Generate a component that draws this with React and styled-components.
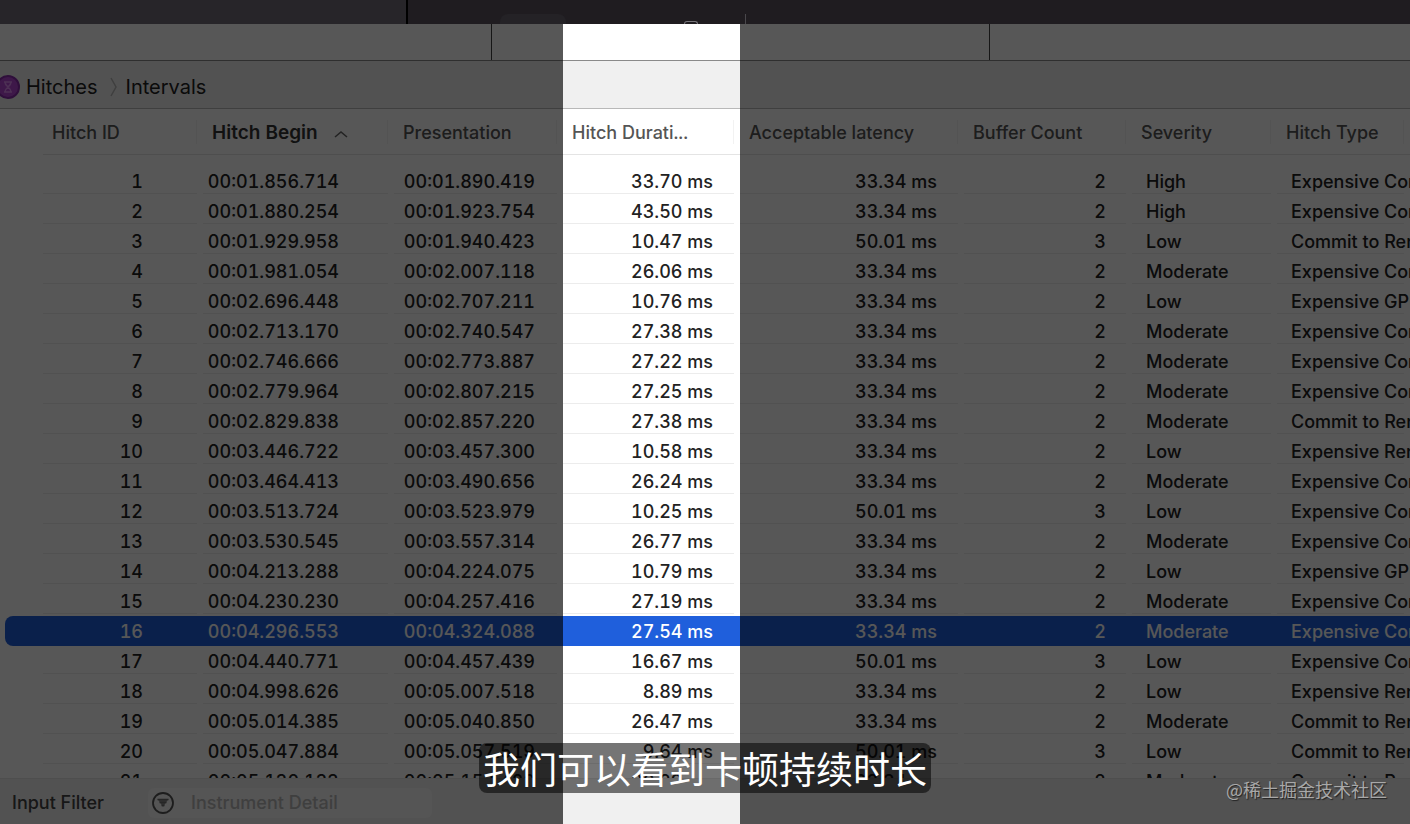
import styled, { createGlobalStyle } from "styled-components";

const columns = [
    { label: "Hitch ID", width: "160px", align: "right", pad: 60 },
    { label: "Hitch Begin", width: "191px", align: "right", pad: 55, sorted: true },
    { label: "Presentation", width: "169px", align: "right", pad: 28 },
    { label: "Hitch Durati...", width: "177px", align: "right", pad: 27 },
    { label: "Acceptable latency", width: "224px", align: "right", pad: 27 },
    { label: "Buffer Count", width: "168px", align: "right", pad: 26 },
    { label: "Severity", width: "145px", align: "left", pad: 14 },
    { label: "Hitch Type", width: "auto", align: "left", pad: 14 }
];

const COMMIT = "Expensive Commit";
const GPU = "Expensive GPU";
const RENDER = "Expensive Render";
const TO_RENDER = "Commit to Render";

const hitches = [
    ["1", "00:01.856.714", "00:01.890.419", "33.70 ms", "33.34 ms", "2", "High", COMMIT],
    ["2", "00:01.880.254", "00:01.923.754", "43.50 ms", "33.34 ms", "2", "High", COMMIT],
    ["3", "00:01.929.958", "00:01.940.423", "10.47 ms", "50.01 ms", "3", "Low", TO_RENDER],
    ["4", "00:01.981.054", "00:02.007.118", "26.06 ms", "33.34 ms", "2", "Moderate", COMMIT],
    ["5", "00:02.696.448", "00:02.707.211", "10.76 ms", "33.34 ms", "2", "Low", GPU],
    ["6", "00:02.713.170", "00:02.740.547", "27.38 ms", "33.34 ms", "2", "Moderate", COMMIT],
    ["7", "00:02.746.666", "00:02.773.887", "27.22 ms", "33.34 ms", "2", "Moderate", COMMIT],
    ["8", "00:02.779.964", "00:02.807.215", "27.25 ms", "33.34 ms", "2", "Moderate", COMMIT],
    ["9", "00:02.829.838", "00:02.857.220", "27.38 ms", "33.34 ms", "2", "Moderate", TO_RENDER],
    ["10", "00:03.446.722", "00:03.457.300", "10.58 ms", "33.34 ms", "2", "Low", RENDER],
    ["11", "00:03.464.413", "00:03.490.656", "26.24 ms", "33.34 ms", "2", "Moderate", COMMIT],
    ["12", "00:03.513.724", "00:03.523.979", "10.25 ms", "50.01 ms", "3", "Low", COMMIT],
    ["13", "00:03.530.545", "00:03.557.314", "26.77 ms", "33.34 ms", "2", "Moderate", COMMIT],
    ["14", "00:04.213.288", "00:04.224.075", "10.79 ms", "33.34 ms", "2", "Low", GPU],
    ["15", "00:04.230.230", "00:04.257.416", "27.19 ms", "33.34 ms", "2", "Moderate", COMMIT],
    ["16", "00:04.296.553", "00:04.324.088", "27.54 ms", "33.34 ms", "2", "Moderate", COMMIT],
    ["17", "00:04.440.771", "00:04.457.439", "16.67 ms", "50.01 ms", "3", "Low", COMMIT],
    ["18", "00:04.998.626", "00:05.007.518", "8.89 ms", "33.34 ms", "2", "Low", RENDER],
    ["19", "00:05.014.385", "00:05.040.850", "26.47 ms", "33.34 ms", "2", "Moderate", TO_RENDER],
    ["20", "00:05.047.884", "00:05.057.519", "9.64 ms", "50.01 ms", "3", "Low", TO_RENDER],
    ["21", "00:05.130.133", "00:05.157.420", "26.29 ms", "33.34 ms", "2", "Moderate", TO_RENDER]
];

const SELECTED = "16";

export default function App() {
    return (
        <Page>
            <GlobalStyle />
            <TitleBar>
                <TitlePane />
                <TitleTools>
                    <Tab />
                    <Knob />
                    <Divider />
                </TitleTools>
            </TitleBar>
            <Window>
                <Tracks>
                    <Track $width={492} />
                    <Track $width={498} />
                </Tracks>
                <Breadcrumb>
                    <HitchIcon />
                    <Crumb href="#hitches">Hitches</Crumb>
                    <CrumbArrow />
                    <Crumb href="#intervals">Intervals</Crumb>
                </Breadcrumb>
                <TableArea>
                    <HitchTable />
                </TableArea>
                <FilterBar>
                    <FilterLabel htmlFor="detail">Input Filter</FilterLabel>
                    <FilterField>
                        <FilterIcon />
                        <FilterInput id="detail" placeholder="Instrument Detail" />
                    </FilterField>
                </FilterBar>
                <Spotlight />
            </Window>
            <Subtitle>我们可以看到卡顿持续时长</Subtitle>
            <Watermark>@稀土掘金技术社区</Watermark>
        </Page>
    );
}

function HitchTable() {
    return (
        <Table>
            <colgroup>
                <Col $width="43px" />
                {columns.map((column) => <Col key={column.label} $width={column.width} />)}
            </colgroup>
            <thead>
                <tr>
                    <HeadLead />
                    {columns.map((column) => (
                        <HeadCell key={column.label} $sorted={column.sorted}>
                            {column.label}
                            {column.sorted && <SortArrow />}
                        </HeadCell>
                    ))}
                </tr>
            </thead>
            <Body>
                {hitches.map((hitch) => (
                    <Row key={hitch[0]} $selected={hitch[0] === SELECTED}>
                        <LeadCell />
                        {hitch.map((value, i) => (
                            <Cell key={columns[i].label} $align={columns[i].align} $pad={columns[i].pad}>
                                {value}
                            </Cell>
                        ))}
                    </Row>
                ))}
            </Body>
        </Table>
    );
}

function HitchIcon() {
    return (
        <Badge viewBox="0 0 24 24" aria-hidden="true">
            <circle cx="12" cy="12" r="11" fill="#b648d6" stroke="#8a2cac" strokeWidth="2" />
            <path d="M8 7h8M8 17h8M9 7c0 5 6 5 6 10M15 7c0 5-6 5-6 10" fill="none" stroke="#e08cf5" strokeWidth="1.6" />
        </Badge>
    );
}

function CrumbArrow() {
    return (
        <Chevron viewBox="0 0 8 20" aria-hidden="true">
            <path d="M1 1l5 9-5 9" fill="none" stroke="#b8b8b8" strokeWidth="1.5" />
        </Chevron>
    );
}

function SortArrow() {
    return (
        <Sort viewBox="0 0 14 8" aria-hidden="true">
            <path d="M1 7l6-5 6 5" fill="none" stroke="#666" strokeWidth="1.6" />
        </Sort>
    );
}

function FilterIcon() {
    return (
        <Funnel viewBox="0 0 24 24" aria-hidden="true">
            <circle cx="12" cy="12" r="10" fill="none" stroke="#555" strokeWidth="1.8" />
            <path d="M6.500 8h11l-5.500 8z" fill="#8c8c8c" />
            <path d="M6.500 8.500h11M8.500 11.500h7M10.500 14.500h3" fill="none" stroke="#707070" strokeWidth="1.6" />
        </Funnel>
    );
}

const GlobalStyle = createGlobalStyle`
    * {
        box-sizing: border-box;
    }
    body {
        margin: 0;
        overflow: hidden;
        font-family: Inter, "Noto Sans CJK SC", sans-serif;
        font-size: 18px;
        font-weight: 500;
        color: #222222;
    }
`
const Page = styled.div`
    position: relative;
    display: flex;
    flex-direction: column;
    height: 100vh;
    overflow: hidden;
`
const TitleBar = styled.header`
    display: flex;
    flex: none;
    height: 24px;
    background-color: #1f1c20;
`
const TitlePane = styled.div`
    width: 408px;
    background-color: #272529;
    border-right: 2px solid #000000;
`
const TitleTools = styled.div`
    flex: 1;
    display: flex;
    align-items: flex-end;
    padding-left: 92px;
`
const Tab = styled.div`
    width: 66px;
    height: 10px;
    border-radius: 8px 8px 0 0;
    background-color: #242226;
`
const Knob = styled.div`
    width: 14px;
    height: 3px;
    margin-left: 118px;
    border: 1px solid #77757a;
    border-bottom: none;
    border-radius: 3px 3px 0 0;
`
const Divider = styled.div`
    width: 1px;
    height: 10px;
    margin-left: 47px;
    background-color: #4a484c;
`
const Window = styled.main`
    position: relative;
    flex: 1;
    display: flex;
    flex-direction: column;
    min-height: 0;
    overflow: hidden;
    background-color: #ffffff;
`
const Tracks = styled.div`
    display: flex;
    flex: none;
    height: 37px;
    border-bottom: 1px solid #8a8a8a;
`
const Track = styled.div`
    width: ${(props) => props.$width}px;
    border-right: 1px solid #404040;
`
const Breadcrumb = styled.nav`
    display: flex;
    flex: none;
    align-items: center;
    height: 48px;
    padding-top: 4px;
    background-color: #f0f0f0;
    border-bottom: 1px solid #b8b8b8;
    font-size: 20px;
    font-weight: 400;
`
const Badge = styled.svg`
    width: 24px;
    height: 24px;
    margin-left: -4px;
    margin-right: 6px;
`
const Crumb = styled.a`
    color: #222222;
    text-decoration: none;
`
const Chevron = styled.svg`
    width: 8px;
    height: 20px;
    margin: 0 8px 0 12px;
`
const TableArea = styled.section`
    flex: 1;
    min-height: 0;
    overflow: hidden;
`
const Table = styled.table`
    width: 100%;
    table-layout: fixed;
    border-collapse: separate;
    border-spacing: 0;
    font-variant-numeric: tabular-nums;
`
const Col = styled.col`
    width: ${(props) => props.$width};
`
const HeadLead = styled.td`
    padding: 0;
`
const HeadCell = styled.th`
    height: 46px;
    padding: 2px 0 0 9px;
    border-bottom: 1px solid #e4e4e4;
    text-align: left;
    white-space: nowrap;
    font-size: ${(props) => props.$sorted ? "19px" : "18px"};
    font-weight: ${(props) => props.$sorted ? 600 : 500};
    color: ${(props) => props.$sorted ? "#333333" : "#555555"};
    background: linear-gradient(#f2f2f2, #f2f2f2) right 6px center / 1px 24px no-repeat;
`
const Sort = styled.svg`
    width: 14px;
    height: 8px;
    margin-left: 16px;
    vertical-align: middle;
`
const Body = styled.tbody`
    &::before {
        content: "";
        display: block;
        height: 11px;
    }
`
const LeadCell = styled.td`
    padding: 0;
`
const Cell = styled.td`
    height: 30px;
    padding: ${(props) => props.$align === "right" ? `2px ${props.$pad}px 0 0` : `2px 0 0 ${props.$pad}px`};
    line-height: 28px;
    text-align: ${(props) => props.$align};
    white-space: nowrap;
    background: linear-gradient(#ececec, #ececec) left bottom 2px / calc(100% - 6px) 1px no-repeat;
`
const Row = styled.tr`
    ${(props) => props.$selected && `
        color: #ffffff;
        > td {
            background: #1f5fdc;
        }
        > td:first-child {
            clip-path: inset(0 0 0 5px round 8px 0 0 8px);
        }
    `}
`
const FilterBar = styled.footer`
    display: flex;
    flex: none;
    align-items: center;
    height: 46px;
    padding: 2px 0 0 12px;
    background-color: #f0f0f0;
    border-top: 1px solid #e4e4e4;
`
const FilterLabel = styled.label`
    width: 136px;
    color: #444444;
`
const FilterField = styled.div`
    display: flex;
    align-items: center;
    width: 284px;
    height: 30px;
    padding-left: 3px;
    border-radius: 6px;
    background-color: #f8f8f8;
`
const Funnel = styled.svg`
    width: 24px;
    height: 24px;
`
const FilterInput = styled.input`
    flex: 1;
    min-width: 0;
    height: 28px;
    padding: 0 0 0 16px;
    border: none;
    outline: none;
    background: none;
    font: inherit;
    &::placeholder {
        color: #b8b8b8;
    }
`
const Spotlight = styled.div`
    position: absolute;
    top: 0;
    bottom: 0;
    left: 563px;
    width: 177px;
    box-shadow: 0 0 0 4000px rgba(0, 0, 0, 0.66);
    pointer-events: none;
`
const Subtitle = styled.p`
    position: absolute;
    left: 50%;
    bottom: 31px;
    transform: translateX(-50%);
    margin: 0;
    padding: 0 4px;
    border-radius: 8px;
    background-color: rgba(0, 0, 0, 0.54);
    color: #ffffff;
    font-family: "Noto Sans CJK SC", sans-serif;
    font-size: 37px;
    font-weight: 400;
    line-height: 50px;
    white-space: nowrap;
`
const Watermark = styled.span`
    position: absolute;
    right: 23px;
    bottom: 23px;
    color: #a8a8a8;
    font-family: "Noto Sans CJK SC", sans-serif;
    font-size: 18px;
    font-weight: 400;
    line-height: 24px;
    text-shadow: 1px 1px 1px rgba(0, 0, 0, 0.6);
`
